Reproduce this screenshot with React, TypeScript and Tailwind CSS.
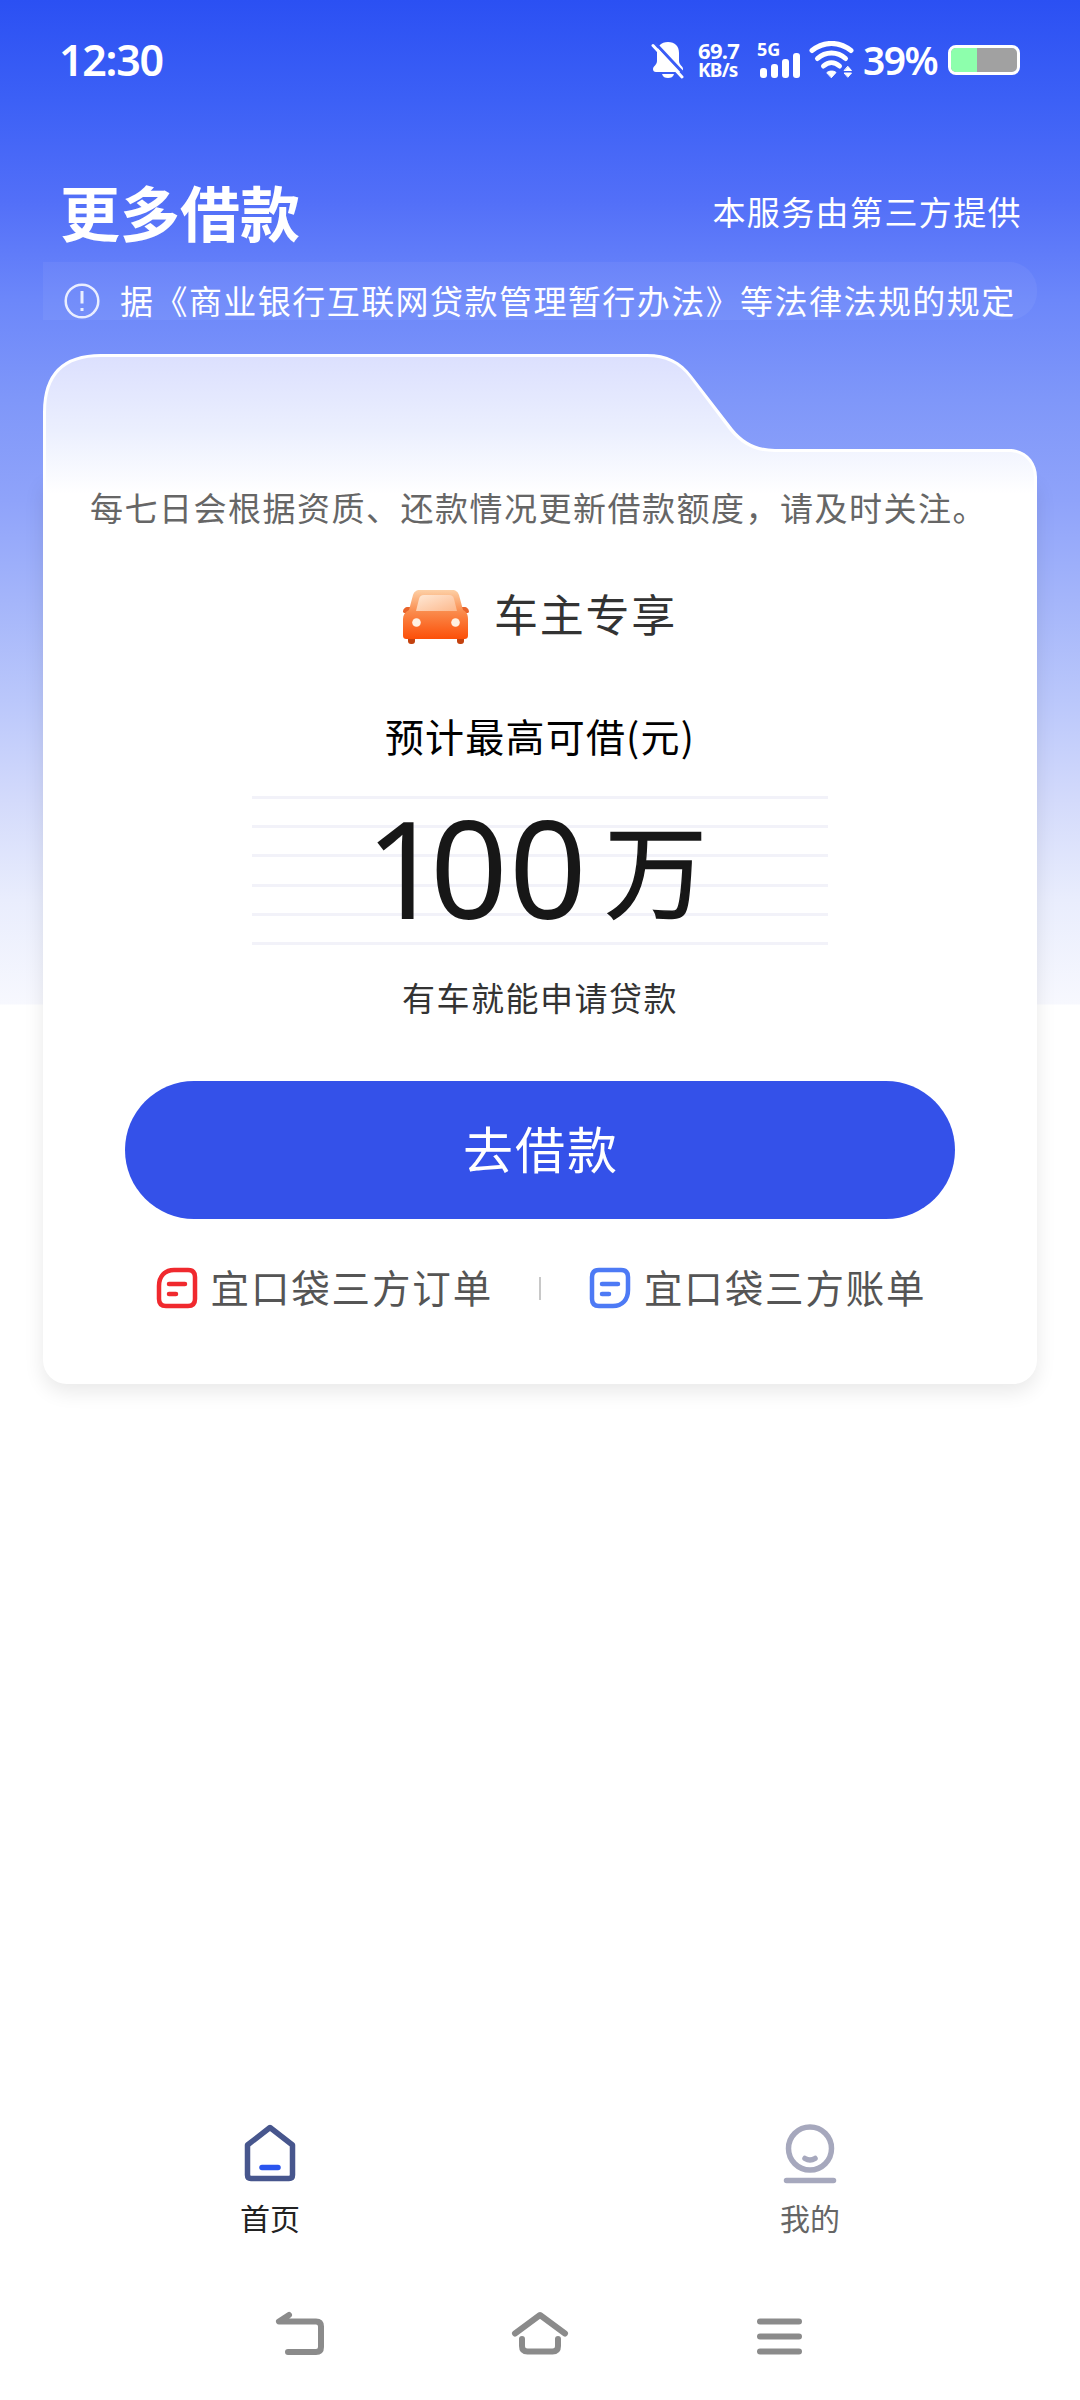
import type { ReactNode } from 'react';

const lines = [0, 1, 2, 3, 4, 5];

function StatusBar() {
    return (
        <div className="flex h-[120px] items-center justify-between pr-[60px] pl-[59px] font-['Noto_Sans'] font-semibold text-white">
            <span className="-mt-[2px] text-[43px] leading-none tracking-[-1.300px]">12:30</span>
            <div className="flex items-center">
                {/* Muted bell */}
                <svg className="h-[38px] w-[34px]" viewBox="0 0 34 38" fill="none">
                    <path d="M17 1C10 1 6 5 6 12v8c0 4-4 5-4 8 0 2 1 3 3 3h24c2 0 3-1 3-3 0-3-4-4-4-8v-8C28 5 24 1 17 1Z" fill="white" />
                    <path d="M11 33h12c-1 3-3 4-6 4s-5-1-6-4Z" fill="white" />
                    <path d="M4 2 35 35" stroke="#3a5cf6" strokeWidth="3" />
                    <path d="M2 4.500 31 36" stroke="white" strokeWidth="3" strokeLinecap="round" />
                </svg>
                <div className="ml-[13px] w-[46px] font-bold">
                    <div className="text-[22px] leading-[20px] tracking-[-0.700px]">69.7</div>
                    <div className="text-[19px] leading-[20px] tracking-[-0.800px]">KB/s</div>
                </div>
                {/* Signal */}
                <div className="relative ml-[14px] h-[38px] w-[44px]">
                    <svg className="h-[38px] w-[44px]" viewBox="0 0 44 38">
                        <rect x="2" y="27" width="7" height="10" rx="3" fill="white" />
                        <rect x="13" y="23" width="7" height="14" rx="3" fill="white" />
                        <rect x="24" y="18" width="7" height="19" rx="3" fill="white" />
                        <rect x="35" y="12" width="7" height="25" rx="3" fill="white" />
                    </svg>
                    <span className="absolute -top-[2px] -left-[1px] text-[18px] leading-[20px] font-bold">5G</span>
                </div>
                {/* Wifi */}
                <svg className="ml-[7px] h-[38px] w-[46px]" viewBox="0 0 46 38" fill="none" stroke="white" strokeWidth="5" strokeLinecap="round">
                    <path d="M3 9.500c12-9.500 27-9.500 39 0" />
                    <path d="M8.500 17.500c8-7.500 20-7.500 28 0" />
                    <path d="M14.500 25c5-4.500 11-4.500 16 0" />
                    <path d="M18 31.500c2-2 7-2 9 0l-4.500 5Z" fill="white" strokeWidth="1" />
                    <path d="M39 25.500l3.500 4h-7ZM39 36l3.500-4h-7Z" fill="white" strokeWidth="1" />
                </svg>
                <span className="-mt-[2px] ml-[8px] w-[76px] text-[39px] leading-none tracking-[-1.600px]">39%</span>
                <div className="ml-[9px] flex h-[30px] w-[72px] overflow-hidden rounded-[8px] border-[3px] border-white bg-[#a1a1a1]">
                    <div className="w-[26px] bg-[#8dffac]" />
                </div>
            </div>
        </div>
    );
}

function CarIcon() {
    return (
        <svg className="mt-[2px] h-[54px] w-[66px]" viewBox="0 0 66 54">
            <defs>
                <linearGradient id="carBody" x1="0" y1="0" x2="0" y2="1">
                    <stop offset="0" stopColor="#fdd0a6" />
                    <stop offset="0.45" stopColor="#fa8a4b" />
                    <stop offset="1" stopColor="#fc4f08" />
                </linearGradient>
                <linearGradient id="carGlass" x1="0" y1="0" x2="1" y2="1">
                    <stop offset="0" stopColor="#ffe9d6" />
                    <stop offset="1" stopColor="#fcb88c" />
                </linearGradient>
            </defs>
            <rect x="5" y="44" width="7" height="10" rx="3" fill="#c3420f" />
            <rect x="54" y="44" width="7" height="10" rx="3" fill="#c3420f" />
            <path d="M0 22c0-3 2-5 5-5h4v6H1ZM66 22c0-3-2-5-5-5h-4v6h8Z" fill="#e8632a" />
            <path d="M17 0h32c4 0 6 2 7 5l4 15c4 2 5 5 5 9v16c0 3-1 4-4 4H4c-3 0-4-1-4-4V29c0-4 2-7 6-9l4-15c1-3 3-5 7-5Z" fill="url(#carBody)" />
            <path d="M21 5h25c3 0 4 1 5 4l3 12H13l3-12c1-3 2-4 5-4Z" fill="url(#carGlass)" />
            <circle cx="13.500" cy="32.500" r="4.300" fill="#fff1e2" />
            <circle cx="52.500" cy="32.500" r="4.300" fill="#fff1e2" />
        </svg>
    );
}

function CardTop() {
    return (
        <svg className="absolute top-0 left-0 h-[150px] w-[994px]" viewBox="0 0 994 150" fill="none">
            <defs>
                <linearGradient id="cardTop" x1="0" y1="0" x2="0" y2="1">
                    <stop offset="0" stopColor="#dce0fe" />
                    <stop offset="0.5" stopColor="#ebeffe" />
                    <stop offset="0.93" stopColor="#ffffff" />
                </linearGradient>
            </defs>
            <path d="M0 150V58Q0 0 58 0H604C624 0 638 7 649 22L690 75C701 88 714 95 732 95H966C982 95 994 107 994 123V150Z" fill="white" />
            <path d="M3 150V58Q3 3 58 3H604C622 3 636 9 647 24L687 77C699 91 712 98 732 98H966C981 98 991 109 991 123V150Z" fill="url(#cardTop)" />
        </svg>
    );
}

function OrderLink({ icon, label }: { icon: ReactNode; label: string }) {
    return (
        <div className="flex items-center">
            {icon}
            <span className="-mt-[3px] ml-[13px] text-[38.500px] leading-none tracking-[1.850px] text-[#555]">{label}</span>
        </div>
    );
}

function LoanCard() {
    return (
        <div className="relative mx-[43px] mt-[34px] h-[1030px]">
            <div className="absolute inset-x-0 top-[125px] bottom-0 rounded-b-[24px] bg-white shadow-[0_8px_20px_rgba(0,0,0,0.09)]" />
            <CardTop />
            <div className="relative flex h-full flex-col items-center pt-[132px]">
                <p className="h-[42px] text-[33px] leading-[42px] tracking-[1.500px] whitespace-nowrap text-[#666]">
                    <span className="-ml-[3px]">每七日会根据资质、还款情况更新借款额度，请及时关注。</span>
                </p>
                <div className="mt-[59px] flex h-[58px] items-center">
                    <CarIcon />
                    <span className="-mt-[6px] ml-[25px] text-[44px] leading-none tracking-[1.700px] text-[#333]">车主专享</span>
                </div>
                <p className="mt-[65px] h-[50px] text-[39px] leading-[50px] tracking-[1.200px] text-black">预计最高可借(元)</p>

                {/* Amount over ruled lines */}
                <div className="relative mt-[36px] flex h-[149px] w-[576px] flex-col justify-between">
                    {lines.map((n) => (
                        <div key={n} className="h-[3px] bg-[#f2f2f9]" />
                    ))}
                    <div className="absolute inset-x-0 -top-[4px] flex h-[149px] items-baseline justify-center pr-[8px] leading-[149px] text-[#171717]">
                        <span className="font-['Noto_Sans'] text-[136px] tracking-[1px]">
                            <span className="tracking-[-13px]">1</span>00
                        </span>
                        <span className="relative -top-[8px] ml-[17px] text-[102px] [-webkit-text-stroke:1.500px_#171717]">万</span>
                    </div>
                </div>

                <p className="mt-[30px] h-[44px] text-[33px] leading-[44px] tracking-[1.500px] text-[#333]">有车就能申请贷款</p>
                <button className="mt-[62px] h-[138px] w-[830px] rounded-full bg-[#3451e9] pb-[7px] pl-[2px] text-[50px] leading-none tracking-[2px] text-white">
                    去借款
                </button>

                <div className="mt-[44px] flex h-[50px] items-center pl-[2px]">
                    <OrderLink
                        label="宜口袋三方订单"
                        icon={
                            <svg className="h-[42px] w-[42px]" viewBox="0 0 42 42" fill="none" stroke="#f0292e" strokeWidth="4.500" strokeLinecap="round">
                                <path d="M18 3h14q7 0 7 7v22q0 7-7 7H10q-7 0-7-7V19C3 9 9 3 18 3Z" />
                                <path d="M13 17h16M13 27h7" />
                            </svg>
                        }
                    />
                    <div className="mr-[48px] ml-[46px] h-[23px] w-[2px] bg-[#c8c8c8]" />
                    <OrderLink
                        label="宜口袋三方账单"
                        icon={
                            <svg className="h-[42px] w-[42px]" viewBox="0 0 42 42" fill="none" stroke="#4d7af5" strokeWidth="4.500" strokeLinecap="round">
                                <path d="M10 3h22q7 0 7 7v13C39 33 33 39 24 39H10q-7 0-7-7V10q0-7 7-7Z" />
                                <path d="M13 17h16M13 27h7" />
                            </svg>
                        }
                    />
                </div>
            </div>
        </div>
    );
}

function TabBar() {
    return (
        <div className="flex h-[150px] text-[30px] leading-none">
            <div className="flex flex-1 flex-col items-center">
                <svg className="h-[64px] w-[60px]" viewBox="0 0 60 64" fill="none">
                    <path d="M30 7.500 52.500 25V55q0 3.500-3.500 3.500H11Q7.500 58.500 7.500 55V25Z" stroke="#47568d" strokeWidth="5.500" strokeLinejoin="round" />
                    <path d="M22 47.500H38" stroke="#2a55ee" strokeWidth="5.500" strokeLinecap="round" />
                </svg>
                <span className="mt-[18px] text-[#222]">首页</span>
            </div>
            <div className="flex flex-1 flex-col items-center">
                <svg className="h-[64px] w-[60px]" viewBox="0 0 60 64" fill="none" stroke="#a6a8bd" strokeWidth="5.500" strokeLinecap="round">
                    <circle cx="30" cy="28.500" r="21.500" />
                    <path d="M25 38.500q5 3 10 0M6.500 60.500h47" />
                </svg>
                <span className="mt-[18px] text-[#666]">我的</span>
            </div>
        </div>
    );
}

function SystemNav() {
    return (
        <div className="flex h-[130px] items-center justify-center gap-[180px]">
            <svg className="h-[56px] w-[56px]" viewBox="0 0 56 56" fill="none" stroke="#8b8b8b" strokeWidth="6" strokeLinecap="round" strokeLinejoin="round">
                <path d="M15 8 5 14.500H42q5 0 5 5V40q0 5-5 5H14" />
            </svg>
            <svg className="h-[56px] w-[60px]" viewBox="0 0 60 56" fill="none" stroke="#8b8b8b" strokeWidth="6" strokeLinecap="round" strokeLinejoin="round">
                <path d="M5 26.500 30 8 55 26.500M12 32v7q0 5.500 5.500 5.500h25Q48 44.500 48 39v-7" />
            </svg>
            <svg className="h-[56px] w-[56px]" viewBox="0 0 56 56" fill="none" stroke="#8b8b8b" strokeWidth="6" strokeLinecap="round">
                <path d="M10 14.500H49M10 29.500H49M10 44.500H49" />
            </svg>
        </div>
    );
}

export default function App() {
    return (
        <div className="flex h-[2400px] w-[1080px] flex-col bg-[linear-gradient(180deg,#2b50f3_0px,#3c60f6_100px,#526ff8_200px,#6c87fa_300px,#7f97f9_400px,#8fa3fa_500px,#a4b5fa_600px,#bac7fb_700px,#d3dafb_800px,#e9edfd_900px,#f7f8fe_1004px,#ffffff_1005px)] font-['Noto_Sans_CJK_SC',sans-serif]">
            <StatusBar />
            <div className="flex h-[142px] items-center justify-between pt-[40px] pr-[58px] pl-[60px] text-white">
                <h1 className="text-[60px] leading-none font-bold">更多借款</h1>
                <span className="text-[33px] leading-none tracking-[1.400px]">本服务由第三方提供</span>
            </div>
            <div className="mx-[43px] flex h-[58px] items-center rounded-r-[28px] bg-white/5 pt-[20px] pb-[1px] pl-[21px] text-white">
                <svg className="h-[36px] w-[36px]" viewBox="0 0 36 36" fill="none" stroke="white" strokeOpacity="0.85">
                    <circle cx="18" cy="18" r="16.300" strokeWidth="2.500" />
                    <path d="M18 8v12.500M18 25v3" strokeWidth="3" />
                </svg>
                <span className="ml-[20px] text-[33px] leading-none tracking-[1.450px] whitespace-nowrap">据《商业银行互联网贷款管理暂行办法》等法律法规的规定</span>
            </div>
            <LoanCard />
            <div className="mt-auto">
                <TabBar />
                <SystemNav />
            </div>
        </div>
    );
}
